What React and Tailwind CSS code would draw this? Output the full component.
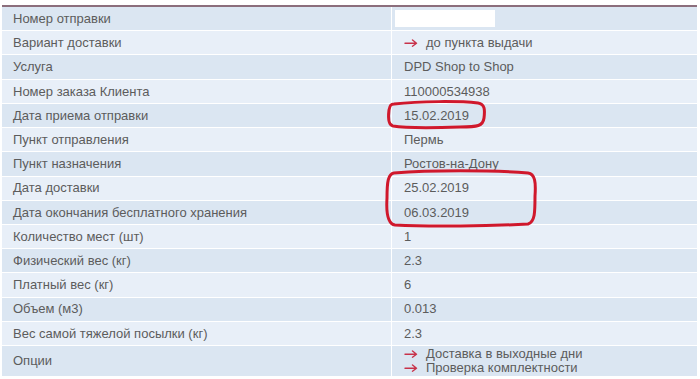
import React from "react";

const Arrow = () => (
  <svg width="14" height="8" viewBox="0 0 14 8" className="shrink-0">
    <path d="M1 4.2 H12 M8.5 1 L12.5 4.2 L8.5 7.2" stroke="#c8324a" strokeWidth="1.4" fill="none" strokeLinecap="round" strokeLinejoin="round" />
  </svg>
);

const rows = [
  ["Номер отправки", { blank: true }],
  ["Вариант доставки", { arrows: ["до пункта выдачи"] }],
  ["Услуга", "DPD Shop to Shop"],
  ["Номер заказа Клиента", "110000534938"],
  ["Дата приема отправки", "15.02.2019"],
  ["Пункт отправления", "Пермь"],
  ["Пункт назначения", "Ростов-на-Дону"],
  ["Дата доставки", "25.02.2019"],
  ["Дата окончания бесплатного хранения", "06.03.2019"],
  ["Количество мест (шт)", "1"],
  ["Физический вес (кг)", "2.3"],
  ["Платный вес (кг)", "6"],
  ["Объем (м3)", "0.013"],
  ["Вес самой тяжелой посылки (кг)", "2.3"],
];

export default function App() {
  return (
    <div className="relative w-[700px] h-[379px] bg-white overflow-hidden text-[13px] text-[#5c5c5c]" style={{ fontFamily: '"Liberation Sans", Arial, sans-serif' }}>
      <div className="ml-[2px] mr-[3px] mt-[5px] border-t-2 border-[#8c6e7c]">
        {rows.map(([label, val], i) => (
          <div key={i} className={`flex h-[24.23px] border-b border-white ${i % 2 === 0 ? "bg-[#dbe6f2]" : "bg-[#e8eff8]"}`}>
            <div className="w-[390px] pl-[11px] flex items-center border-r border-white">{label}</div>
            <div className="flex-1 pl-[12px] flex items-center">
              {typeof val === "string" ? (
                val
              ) : val.blank ? (
                <div className="w-[100px] h-[17px] bg-white -ml-[9px]" />
              ) : (
                <div className="flex items-center gap-[8px]"><Arrow /><span>{val.arrows[0]}</span></div>
              )}
            </div>
          </div>
        ))}
        <div className="flex h-[30px] bg-[#dbe6f2]">
          <div className="w-[390px] pl-[11px] flex items-center border-r border-white">Опции</div>
          <div className="flex-1 pl-[12px] flex flex-col justify-center leading-[14px]">
            <div className="flex items-center gap-[8px]"><Arrow /><span>Доставка в выходные дни</span></div>
            <div className="flex items-center gap-[8px]"><Arrow /><span>Проверка комплектности</span></div>
          </div>
        </div>
      </div>
      <svg className="absolute left-0 top-0 pointer-events-none" width="700" height="379">
        <path d="M394 104 C420 101 460 101 478 103 C485 104 485 110 484 118 C483 126 478 127 460 127 C430 128 405 128 393 126 C388 125 388 118 389 110 C390 105 391 104 394 104 Z" stroke="#d0182c" strokeWidth="3" fill="none" />
        <path d="M394 173 C430 170 490 170 528 173 C535 174 536 182 535 196 C535 212 535 222 528 224 C490 226 430 227 395 225 C388 224 386 214 387 198 C387 182 388 174 394 173 Z" stroke="#d0182c" strokeWidth="3" fill="none" />
      </svg>
    </div>
  );
}
